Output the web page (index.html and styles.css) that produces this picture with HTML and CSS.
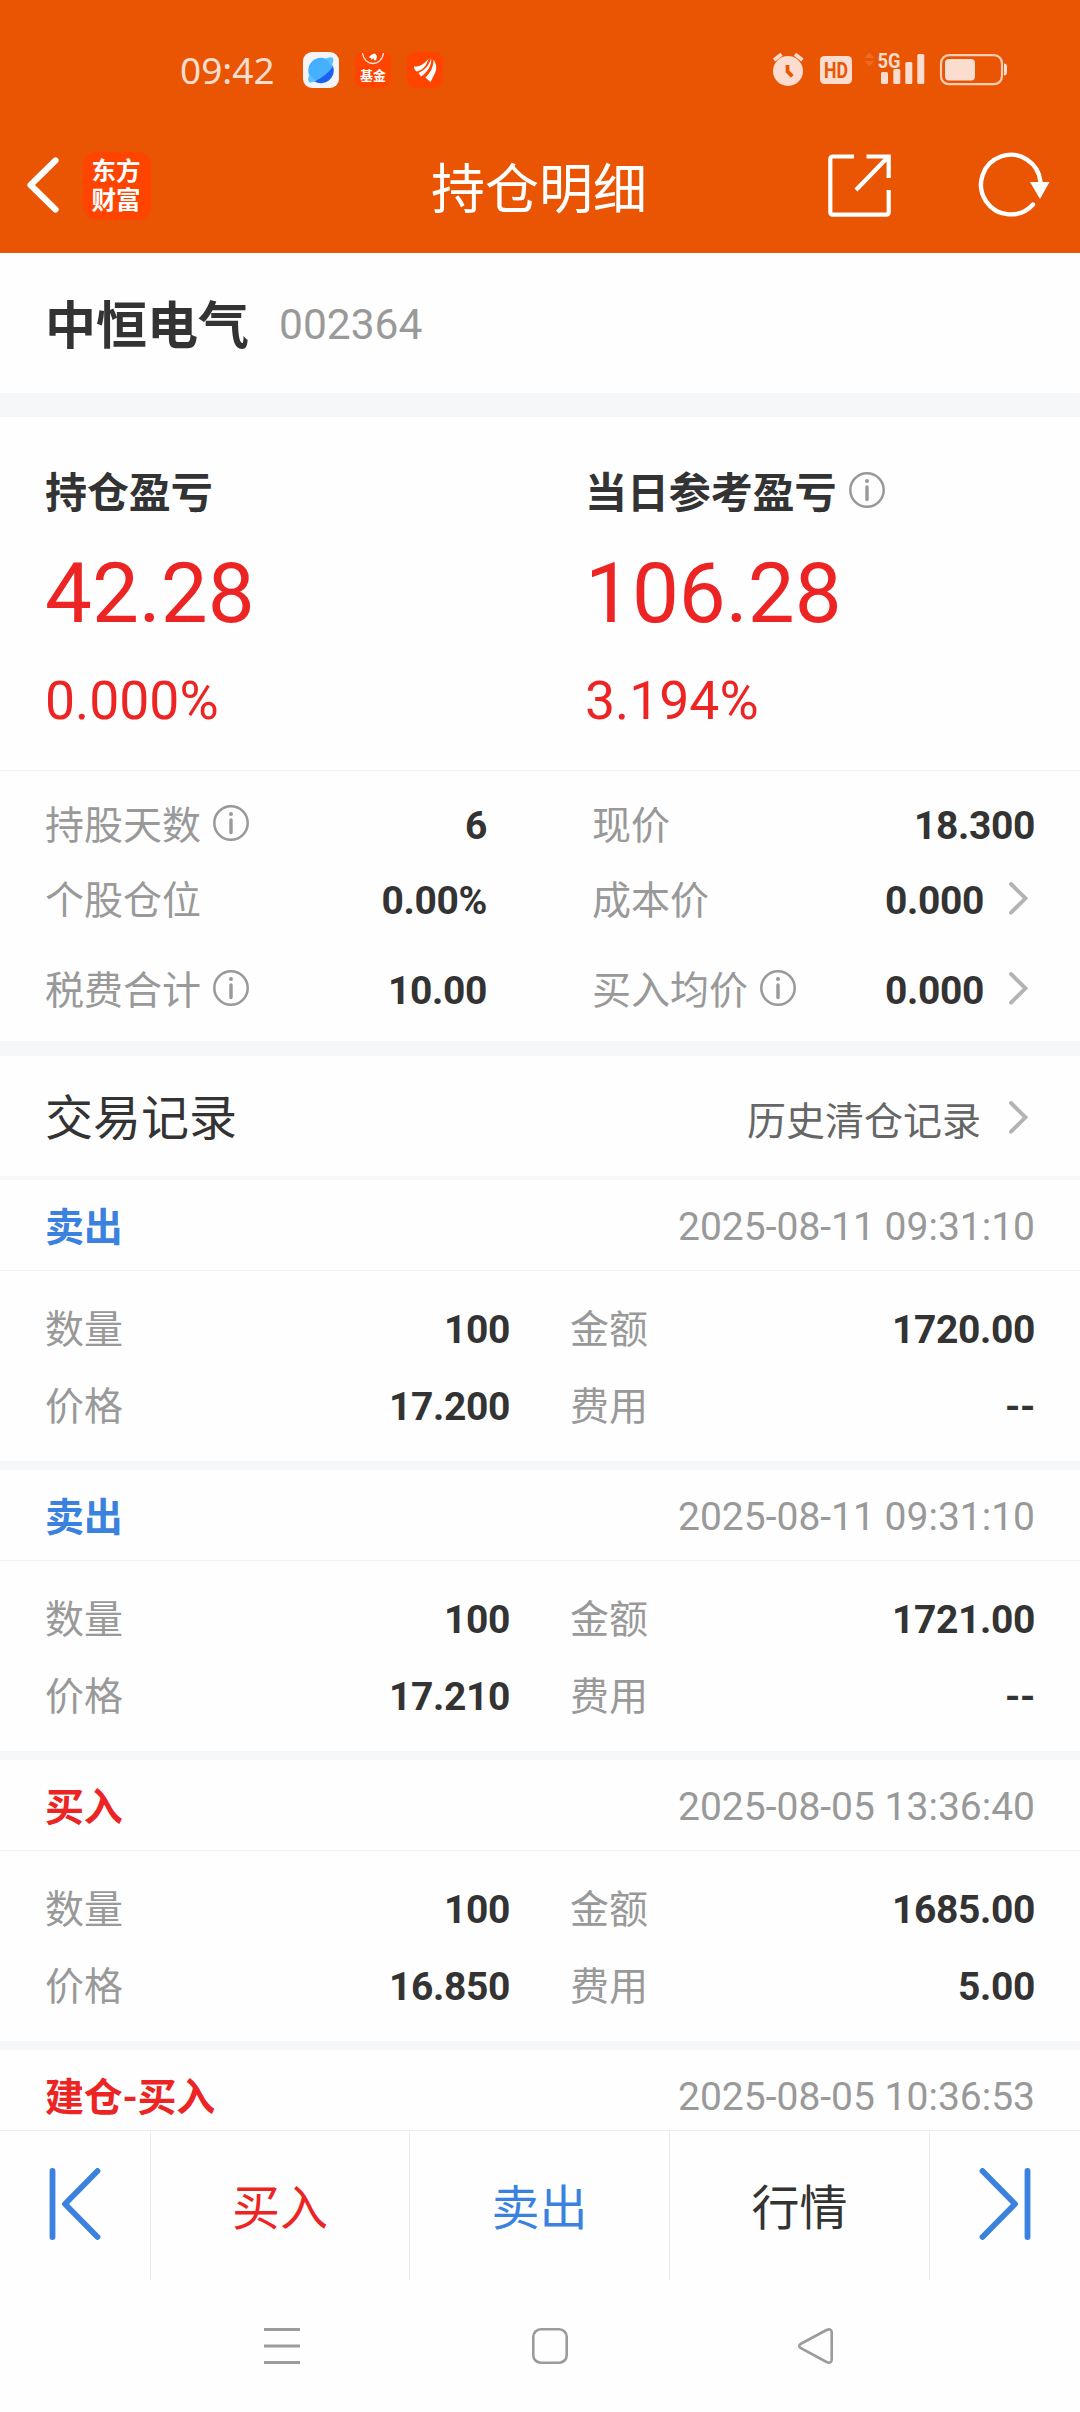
FILE: index.html
```html
<!DOCTYPE html>
<html lang="zh-CN">
<head>
<meta charset="utf-8">
<title>持仓明细</title>
<link rel="stylesheet" href="styles.css">
</head>
<body>
<svg width="0" height="0" class="defs">
  <symbol id="info" viewBox="0 0 36 36"><circle cx="18" cy="18" r="16.7" fill="none" stroke="#999" stroke-width="2.5"/><circle cx="18" cy="8.9" r="2" fill="#999"/><path d="M18 15v12.5" stroke="#999" stroke-width="3.4" stroke-linecap="round"/></symbol>
  <symbol id="chev" viewBox="0 0 19 33"><path d="M2 2l14.5 14.3L2 30.7" fill="none" stroke="#b3b3b3" stroke-width="3.9" stroke-linecap="round"/></symbol>
</svg>

<header class="top">
  <div class="status">
    <span class="clock">09:42</span>
    <svg class="app" width="36" height="36" viewBox="0 0 36 36"><rect width="36" height="36" rx="9" fill="#f4f4f6"/><circle cx="18" cy="18.500" r="12.700" fill="#45b0ff"/><path d="M30 14.500A12.700 12.700 0 0 1 11.500 29.200Q23 24.500 30 14.500z" fill="#1d5ff0"/><path d="M23 6.500Q28.500 4.500 30 6Q31.200 8.500 28.500 14zM6 23Q4.500 28.500 6 30Q8.500 31.500 13.500 28.500z" fill="#5cc0ff"/></svg>
    <div class="app fund">
      <svg width="36" height="14" viewBox="0 0 36 14"><path d="M7.500 1c1 7.500 6 10.500 10.500 10.500S27.500 8.500 28.500 1" fill="none" stroke="#ffe6dc" stroke-width="1.300"/><path d="M14 5.500c1-2.500 3.500-3.500 6-4l2 2.500-1 4.500-2-.5-.5-2-2 2-.5-2z" fill="#fff"/></svg>
      <span>基金</span>
    </div>
    <svg class="app" width="36" height="36" viewBox="0 0 36 36"><rect width="36" height="36" rx="9" fill="#ff4400"/><path d="M7 14.500C13 15 18 11.500 21.500 6.500C20 13.500 15.500 18.500 9.500 19.500C7.500 18 7 16.500 7 14.500zM24 6c1.500 6.500-4 15-10 18.500l-2.500-3.500C17.500 18 22.500 13.500 24 6zM26.500 7.500c3.500 5 3.200 10.500 1.500 13.500L23.500 30l-5.200-4.500C23.500 21 26.500 15 26.500 7.500z" fill="#fff"/></svg>
    <svg class="sys" width="240" height="36" viewBox="770 51 240 36" fill="#fbddcf">
      <circle cx="788" cy="71" r="15"/><path d="M774 60l7.500-5.700M802.500 60l-7.500-5.700" stroke="#fbddcf" stroke-width="3.600"/><path d="M787.500 65v6.500l4.800 4.800" fill="none" stroke="#e95503" stroke-width="3.800"/>
      <rect x="820" y="56" width="32" height="28" rx="4.500"/><text x="836" y="78" text-anchor="middle" class="hd" textLength="24" lengthAdjust="spacingAndGlyphs">HD</text>
      <path d="M864.500 58l5-5.500 5 5.500zM864.500 61l5 5.500 5-5.500z" fill="#ef6a25"/>
      <text x="877.500" y="67.500" class="g5" textLength="23" lengthAdjust="spacingAndGlyphs">5G</text>
      <rect x="881" y="72" width="7" height="12" rx="1.500"/><rect x="893.300" y="69" width="7" height="15" rx="1.500"/><rect x="905.300" y="62" width="7" height="22" rx="1.500"/><rect x="917.300" y="54" width="7" height="30" rx="1.500"/>
      <rect x="941" y="55.200" width="61" height="29" rx="8" fill="none" stroke="#fbcdb4" stroke-width="2.200"/><rect x="945" y="59" width="30" height="21.500" rx="4"/><path d="M1004 63.500q3 0 3 3v6q0 3-3 3z"/>
    </svg>
  </div>
  <div class="bar">
    <svg class="back" width="34" height="58" viewBox="0 0 34 58"><path d="M29.500 4.500L4.500 29l25 24.500" fill="none" stroke="#fff" stroke-width="6.200" stroke-linecap="round" stroke-linejoin="round"/></svg>
    <div class="logo">东方<br>财富</div>
    <h1>持仓明细</h1>
    <svg class="share" width="64" height="64" viewBox="0 0 64 64" fill="none" stroke="#fff" stroke-width="4.200"><path d="M26 2.500H5q-2.700 0-2.700 2.700V58q0 2.700 2.700 2.700H58q2.700 0 2.700-2.700V36M38.500 2.500H60.700V24M60 3L28 36"/></svg>
    <svg class="refresh" width="72" height="66" viewBox="0 0 72 66"><path d="M62.500 30A29.800 29.800 0 1 0 55 52.500" fill="none" stroke="#fff" stroke-width="4.400" stroke-linecap="round"/><path d="M52 30h19.500L62 47z" fill="#fff"/></svg>
  </div>
</header>

<section class="stock"><h2>中恒电气</h2><span class="code">002364</span></section>

<section class="profit">
  <div class="pl"><h3>持仓盈亏</h3><div class="big">42.28</div><div class="pct">0.000%</div></div>
  <div class="pl"><h3>当日参考盈亏<svg class="info"><use href="#info"/></svg></h3><div class="big">106.28</div><div class="pct">3.194%</div></div>
</section>

<section class="stats">
  <div class="cell"><label>持股天数<svg class="info"><use href="#info"/></svg></label><b>6</b></div>
  <div class="cell"><label>现价</label><b>18.300</b></div>
  <div class="cell"><label>个股仓位</label><b>0.00%</b></div>
  <div class="cell"><label>成本价</label><b>0.000</b><svg class="chev"><use href="#chev"/></svg></div>
  <div class="cell"><label>税费合计<svg class="info"><use href="#info"/></svg></label><b>10.00</b></div>
  <div class="cell"><label>买入均价<svg class="info"><use href="#info"/></svg></label><b>0.000</b><svg class="chev"><use href="#chev"/></svg></div>
</section>

<section class="history"><h4>交易记录</h4><span class="more">历史清仓记录</span><svg class="chev"><use href="#chev"/></svg></section>

<main class="records">
  <article>
    <div class="rh"><strong class="sell">卖出</strong><time>2025-08-11 09:31:10</time></div>
    <div class="rb"><label>数量</label><b>100</b><label>金额</label><b>1720.00</b><label>价格</label><b>17.200</b><label>费用</label><b>--</b></div>
  </article>
  <article>
    <div class="rh"><strong class="sell">卖出</strong><time>2025-08-11 09:31:10</time></div>
    <div class="rb"><label>数量</label><b>100</b><label>金额</label><b>1721.00</b><label>价格</label><b>17.210</b><label>费用</label><b>--</b></div>
  </article>
  <article>
    <div class="rh"><strong class="buy">买入</strong><time>2025-08-05 13:36:40</time></div>
    <div class="rb"><label>数量</label><b>100</b><label>金额</label><b>1685.00</b><label>价格</label><b>16.850</b><label>费用</label><b>5.00</b></div>
  </article>
  <article>
    <div class="rh"><strong class="buy">建仓-买入</strong><time>2025-08-05 10:36:53</time></div>
  </article>
</main>

<nav class="actions">
  <a><svg width="52" height="72" viewBox="0 0 52 72" fill="none" stroke="#3a82de" stroke-width="5.800" stroke-linecap="round" stroke-linejoin="round"><path d="M3.500 3v66M48.500 3L16 36l32.500 33"/></svg></a>
  <a class="buy">买入</a>
  <a class="sell">卖出</a>
  <a>行情</a>
  <a><svg width="52" height="72" viewBox="0 0 52 72" fill="none" stroke="#3a82de" stroke-width="5.800" stroke-linecap="round" stroke-linejoin="round"><path d="M48.500 3v66M3.500 3L36 36L3.500 69"/></svg></a>
</nav>

<footer class="system">
  <svg width="36" height="36" viewBox="0 0 36 36" stroke="#9b9b9b" stroke-width="3"><path d="M0 1.500h36M0 18h36M0 34.500h36"/></svg>
  <svg width="36" height="36" viewBox="0 0 36 36" fill="none" stroke="#9b9b9b" stroke-width="2.600"><rect x="1.300" y="1.300" width="33.400" height="33.400" rx="7.500"/></svg>
  <svg width="36" height="36" viewBox="0 0 36 36" fill="none" stroke="#9b9b9b" stroke-width="2.600"><path d="M2.500 16L28.500 2Q33.700 0 33.700 4.500V31.500Q33.700 36 28.500 34L2.500 20Q0 18 2.500 16z"/></svg>
</footer>
</body>
</html>
```
FILE: styles.css
```css
* { box-sizing: border-box; margin: 0; padding: 0; }

body {
  width: 1080px;
  height: 2412px;
  display: flex;
  flex-direction: column;
  overflow: hidden;
  background: #fefefe;
  color: #333;
  font-family: Roboto, "Noto Sans CJK SC", sans-serif;
  font-size: 39px;
  line-height: 60px;
  white-space: nowrap;
}

svg { display: block; flex: none; }
.defs { position: absolute; }

.buy { color: #ed2424; }
.sell { color: #3a82de; }

/* Header */
.top { height: 253px; background: #e95503; color: #fff; }

.status { display: flex; height: 119px; padding: 52px 0 0 180px; }
.clock {
  width: 123px;
  color: #fbddcf;
  font: 37px/36px "Noto Sans", sans-serif;
}
.app { width: 36px; height: 36px; margin-right: 16px; }
.fund { border-radius: 9px; background: #ff4400; }
.fund span {
  display: block;
  font: bold 13px/18px "Noto Sans CJK SC", sans-serif;
  text-align: center;
}
.sys { margin: -1px 0 0 311px; overflow: visible; }
.hd { font: bold 22px Roboto, sans-serif; fill: #e95503; }
.g5 { font: bold 20px Roboto, sans-serif; }

.bar { display: flex; height: 134px; padding: 33px 30px 0 26px; }
.back { margin-top: 4px; }
.logo {
  width: 68px;
  height: 68px;
  margin: 0 280px 0 23px;
  padding: 3px 2px 0 0;
  border-radius: 14px;
  background: #ff4400;
  font: bold 24.500px/29px "Noto Sans CJK SC", sans-serif;
  text-align: center;
}
h1 { width: 218px; margin-top: 9px; font-size: 54px; font-weight: 400; }
.share { margin: 2px 0 0 179px; }
.refresh { margin-left: 86px; }

/* Stock name */
.stock {
  display: flex;
  height: 164px;
  padding: 44px 45px 0;
  border-bottom: 24px solid #f6f7f9;
}
h2 { width: 234px; font-size: 51px; line-height: 60px; }
.code { font-size: 42.500px; color: #999; line-height: 55px; }

/* Profit and loss */
.profit {
  display: grid;
  grid-template-columns: 540px 1fr;
  height: 354px;
  padding: 47px 45px 0;
  border-bottom: 1px solid #f3f3f5;
}
h3 { display: flex; font-size: 42px; line-height: 60px; letter-spacing: -.1px; }
.info { width: 36px; height: 36px; margin: 9px 0 0 12px; }
h3 .info { margin: 8px 0 0 13px; }
.big { font-size: 83.500px; line-height: 100px; margin-top: 20px; color: #ed2424; }
.pct { font-size: 53.500px; line-height: 60px; margin-top: 27px; color: #ed2424; }
.chev { width: 19px; height: 33px; margin: 11px 7px 0 25px; }

/* Holding figures */
.stats {
  display: grid;
  grid-template-columns: 442px 443px;
  grid-template-rows: 75px 90px 60px;
  column-gap: 105px;
  height: 285px;
  padding: 25px 45px 0;
  border-bottom: 15px solid #f6f7f9;
}
.cell { display: flex; }
label { display: flex; color: #999; line-height: 61px; }
b { font-weight: 700; letter-spacing: -.35px; }
.cell b { margin-left: auto; }

.history {
  display: flex;
  height: 124px;
  padding: 33px 45px 0;
  border-bottom: 4px solid #f6f7f9;
}
h4 { font-size: 48px; font-weight: 400; }
.more { margin: 3px 0 0 auto; color: #666; }
.history .chev { margin: 12px 7px 0 28px; }

/* Trade records */
.records { height: 950px; overflow: hidden; }
article { height: 290px; border-bottom: 9px solid #f6f7f9; }
.rh {
  display: flex;
  justify-content: space-between;
  height: 91px;
  padding: 17px 45px 0;
  border-bottom: 1px solid #f3f3f5;
}
.rh strong { padding-top: 1px; letter-spacing: -.3px; }
time { color: #999; }
.rb {
  display: grid;
  grid-template-columns: 100px 365px 160px 365px;
  grid-template-rows: 77px 77px;
  padding: 29px 45px 0;
}
.rb label:nth-of-type(even) { margin-left: 60px; }
.rb b { text-align: right; }

/* Bottom actions */
.actions {
  display: grid;
  grid-template-columns: 151px 259px 260px 260px 150px;
  height: 150px;
  border-top: 1px solid #ebebeb;
  font-size: 48px;
}
.actions a {
  display: flex;
  justify-content: center;
  align-items: center;
  padding-top: 6px;
  border-right: 1px solid #ebebeb;
}
.actions a:first-child, .actions a:last-child { padding: 0 0 4px; }
.actions a:last-child { border: 0; }

.system {
  display: flex;
  gap: 232px;
  padding: 48px 0 0 264px;
}
.system svg:last-child { margin-left: -2px; }
```
